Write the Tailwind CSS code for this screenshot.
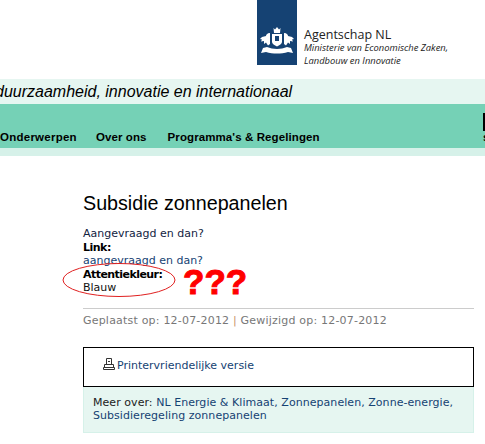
<!DOCTYPE html>
<html lang="nl">

<head>
    <meta charset="UTF-8">
    <title>Subsidie zonnepanelen</title>
    <script src="https://cdn.jsdelivr.net/npm/@tailwindcss/browser@4"></script>
</head>

<body class="bg-white overflow-hidden w-[485px] h-[444px] relative font-['DejaVu_Sans',sans-serif] text-[11px]">

    <!-- Logo -->
    <div class="flex h-[79px] pl-[257px]">
        <div class="w-[40px] h-[65px] bg-[#154273] flex items-end justify-center pb-[10px]">
            <svg width="34" height="28" viewBox="0 0 34 28" fill="#fff">
                <!-- crown -->
                <path d="M13.500 1l1.500 1.500L17 0l2 2.500L20.500 1l-.5 5h-6z" />
                <!-- shield -->
                <path d="M12 7h10v8c0 2-2.500 3-5 4.500C14.500 18 12 17 12 15z" />
                <path d="M15 9h4v5h-4z" fill="#154273" />
                <!-- lions -->
                <path d="M10 6C7 6 6 8 6 9L2 10l-2 2 2 .5-1 2 3-.5 0 3 2-1.500 2 3 2-1.500V9z" />
                <path d="M24 6c3 0 4 2 4 3l4 1 2 2-2 .5 1 2-3-.5 0 3-2-1.500-2 3-2-1.500V9z" />
                <!-- ribbon -->
                <path d="M3 21l4-1c6 2.500 14 2.500 20 0l4 1 2 5-5-1c-7 2-15 2-22 0l-5 1z" />
            </svg>
        </div>
        <div class="pl-[7px] pt-[28px] text-[#222] font-['Open_Sans',sans-serif] text-[9.400px] leading-[13px]">
            <div class="text-[12.500px] leading-[13px]">Agentschap NL</div>
            <div class="italic whitespace-nowrap">Ministerie van Economische Zaken,</div>
            <div class="italic whitespace-nowrap">Landbouw en Innovatie</div>
        </div>
    </div>

    <!-- Tagline -->
    <div class="h-[25px] bg-[#e6f6f1] overflow-hidden">
        <p class="italic text-black font-['Liberation_Sans',sans-serif] text-[16px] leading-[25px] whitespace-nowrap ml-[-5px]">duurzaamheid, innovatie en internationaal</p>
    </div>

    <!-- Menu -->
    <div class="h-[44px] bg-[#75d1b6] flex items-end pb-[3px] gap-[19px] font-bold text-black font-['Liberation_Sans',sans-serif] text-[11.500px]">
        <a class="leading-[16px] tracking-[0.25px]">Onderwerpen</a>
        <a class="leading-[16px] tracking-[0.1px]">Over ons</a>
        <a class="leading-[16px] ml-[2px] tracking-[0.1px]">Programma's &amp; Regelingen</a>
    </div>
    <div class="h-[8px] bg-[#d6f1e9]"></div>

    <!-- Content -->
    <div class="ml-[83px] w-[391px] pt-[35px]">
        <h1 class="text-[19.700px] leading-[24px] text-black font-['Liberation_Sans',sans-serif]">Subsidie zonnepanelen</h1>
        <div class="mt-[12px] leading-[13.500px] text-[#111]">
            <p class="text-[#12233f]">Aangevraagd en dan?</p>
            <p class="font-bold text-black tracking-[-0.5px]">Link:</p>
            <a class="text-[#154273] block">aangevraagd en dan?</a>
            <p class="font-bold text-black tracking-[-0.55px]">Attentiekleur:</p>
            <p>Blauw</p>
        </div>
        <div class="border-t border-[#ccc] mt-[13.500px] pt-[5px] text-[#777] leading-[13px] tracking-[0.2px]">
            Geplaatst op: 12-07-2012 <span class="text-[#c98f6a]">|</span> Gewijzigd op: 12-07-2012
        </div>
        <div class="mt-[20px] h-[40px] border border-black flex items-center pl-[19px] gap-[2px] text-[#154273]">
            <svg class="mb-[6px]" width="12" height="12" viewBox="0 0 12 12" fill="none" stroke="#333">
                <path d="M3.500 6V.5h5V6M1.500 6.500h9v3h-9zM.5 9.500h11v2H.5zM5 3.500h2" />
            </svg>
            <span class="mb-[1px]">Printervriendelijke versie</span>
        </div>
        <div class="bg-[#e6f6f1] border border-t-0 border-[#d6f1e9] h-[46px] px-[9px] pt-[9px] leading-[13px] text-[#154273] tracking-[0.05px]">
            <span class="text-[#222]">Meer over:</span> NL Energie &amp; Klimaat, Zonnepanelen, Zonne-energie, Subsidieregeling zonnepanelen
        </div>
    </div>

    <!-- Search box cut off by the right edge -->
    <div class="absolute left-[483px] top-[113px] w-[20px] h-[18px] border-2 border-black bg-white"></div>
    <div class="absolute left-[483px] top-[131px] text-[11px] leading-[13px] font-bold text-black font-['Liberation_Sans',sans-serif]">s</div>

    <!-- Annotation drawn over the page -->
    <svg class="absolute left-[62px] top-[262px]" width="115" height="36" viewBox="0 0 115 36" fill="none">
        <ellipse cx="57" cy="18" rx="56" ry="16.500" stroke="#e02020" />
    </svg>
    <div class="absolute left-[183px] top-[259px] text-[35px] leading-[46px] font-bold text-[#f00] [-webkit-text-stroke:1px_#f00] font-['Liberation_Sans',sans-serif]">???</div>

</body>

</html>
